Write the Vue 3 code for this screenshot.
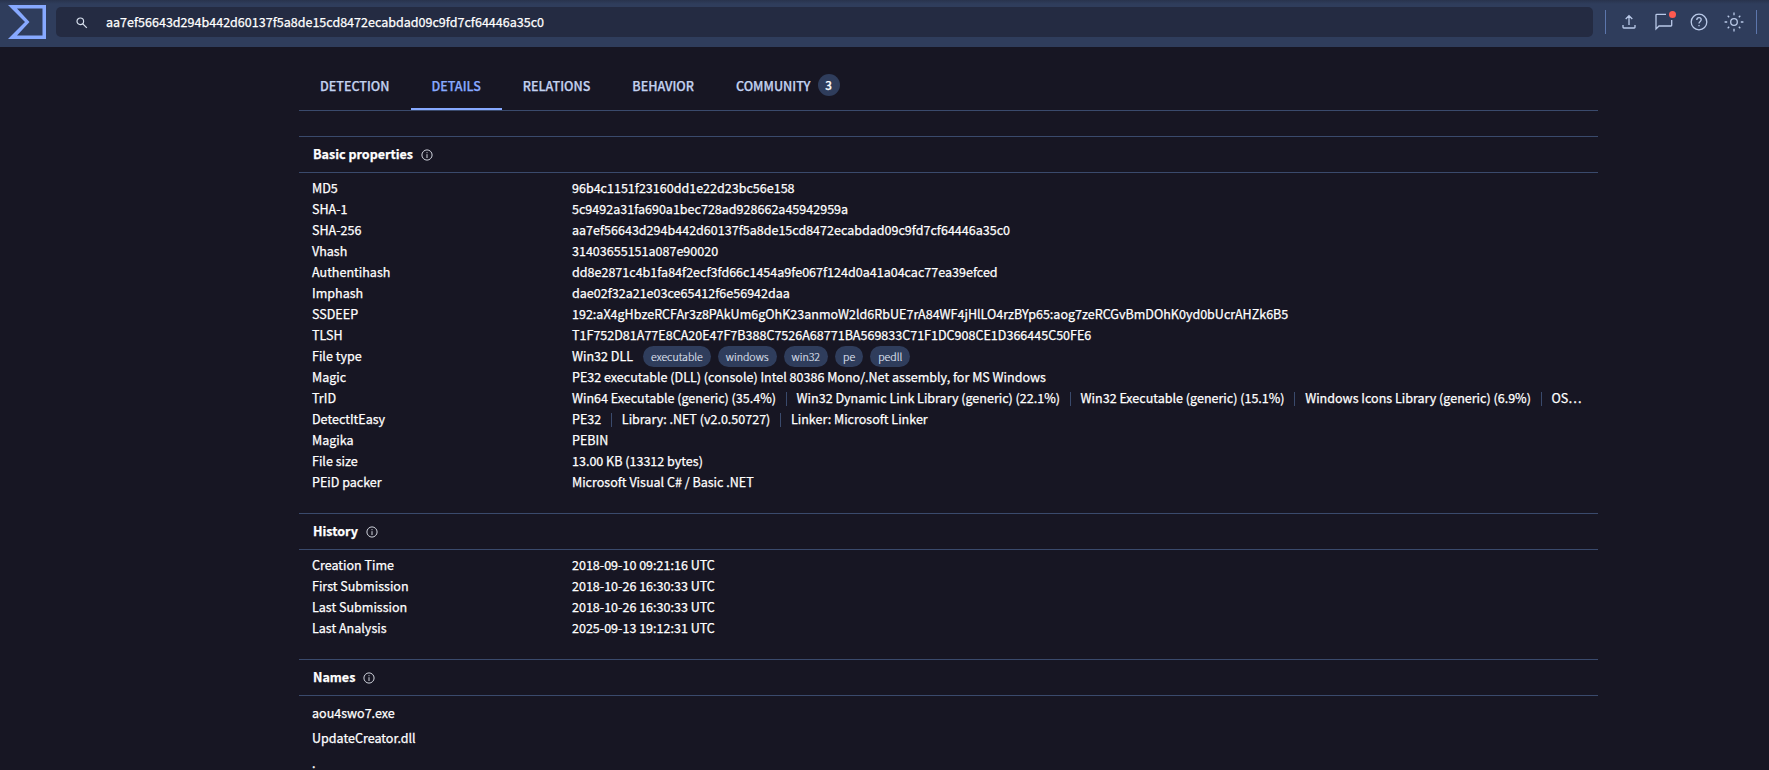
<template>
  <div class="page">
    <header class="topbar">
      <svg class="logo" viewBox="0 0 38 34" width="38" height="34">
        <path fill="#87a9ff" fill-rule="evenodd" d="M0 0H38V34H0L17 17ZM9 3.5L21.5 17L9 30.5H34.5V3.5Z" />
      </svg>
      <div class="search">
        <svg class="search-icon" viewBox="0 0 12 12" width="12" height="12">
          <circle cx="4.3" cy="4.3" r="3.3" />
          <path d="M6.8 6.8L10.8 10.8" />
        </svg>
        <span class="search-text">{{ sha256 }}</span>
      </div>
      <span class="bar"></span>
      <div class="actions">
        <svg viewBox="0 0 20 20" width="20" height="20">
          <path d="M10 13V4M6.7 7L10 3.7L13.3 7M4 13V15.2Q4 16 4.8 16H15.2Q16 16 16 15.2V13" />
        </svg>
        <div class="chat">
          <svg viewBox="0 0 20 20" width="20" height="20">
            <path d="M12 2.3H2.8Q2 2.3 2 3.1V17L5 14H17Q17.7 14 17.7 13.2V8" />
          </svg>
          <span class="dot"></span>
        </div>
        <svg viewBox="0 0 20 20" width="20" height="20">
          <circle cx="10" cy="10" r="7.8" />
          <path d="M7.8 8Q7.8 5.7 10 5.7T12.2 7.8C12.2 9.4 10 9.5 10 11.6M10 13V14.3" />
        </svg>
        <svg viewBox="0 0 20 20" width="20" height="20">
          <circle cx="10" cy="10" r="3.3" />
          <path d="M10 .6V3.2M10 16.8V19.4M.6 10H3.2M16.8 10H19.4M3.7 3.7L5.2 5.2M14.8 14.8L16.3 16.3M3.7 16.3L5.2 14.8M14.8 5.2L16.3 3.7" />
        </svg>
      </div>
      <span class="bar"></span>
    </header>

    <main class="content">
      <nav class="tabs">
        <a v-for="tab in tabs" :key="tab.name" class="tab" :class="{ active: tab.active }">
          <span>{{ tab.name }}</span>
          <span v-if="tab.count" class="count">{{ tab.count }}</span>
        </a>
      </nav>

      <section v-for="section in sections" :key="section.title" class="section">
        <h2 class="section-title">
          <span class="title-text">{{ section.title }}</span>
          <svg class="info" viewBox="0 0 12 12" width="12" height="12">
            <circle cx="6" cy="6" r="5.1" />
            <path d="M6 5.2V9M6 3.2V4.2" />
          </svg>
        </h2>
        <div v-if="section.rows" class="rows">
          <div v-for="row in section.rows" :key="row.label" class="row">
            <span class="label">{{ row.label }}</span>
            <div class="value">
              <span v-for="item in row.items" :key="item" class="item">{{ item }}</span>
              <span v-for="tag in row.tags" :key="tag" class="tag">{{ tag }}</span>
            </div>
          </div>
        </div>
        <div v-else class="names">
          <div v-for="name in section.names" :key="name" class="name">{{ name }}</div>
        </div>
      </section>
    </main>
  </div>
</template>

<script setup>
const sha256 = 'aa7ef56643d294b442d60137f5a8de15cd8472ecabdad09c9fd7cf64446a35c0'

const tabs = [
  { name: 'DETECTION' },
  { name: 'DETAILS', active: true },
  { name: 'RELATIONS' },
  { name: 'BEHAVIOR' },
  { name: 'COMMUNITY', count: 3 },
]

const sections = [
  {
    title: 'Basic properties',
    rows: [
      { label: 'MD5', items: ['96b4c1151f23160dd1e22d23bc56e158'] },
      { label: 'SHA-1', items: ['5c9492a31fa690a1bec728ad928662a45942959a'] },
      { label: 'SHA-256', items: [sha256] },
      { label: 'Vhash', items: ['31403655151a087e90020'] },
      { label: 'Authentihash', items: ['dd8e2871c4b1fa84f2ecf3fd66c1454a9fe067f124d0a41a04cac77ea39efced'] },
      { label: 'Imphash', items: ['dae02f32a21e03ce65412f6e56942daa'] },
      { label: 'SSDEEP', items: ['192:aX4gHbzeRCFAr3z8PAkUm6gOhK23anmoW2ld6RbUE7rA84WF4jHlLO4rzBYp65:aog7zeRCGvBmDOhK0yd0bUcrAHZk6B5'] },
      { label: 'TLSH', items: ['T1F752D81A77E8CA20E47F7B388C7526A68771BA569833C71F1DC908CE1D366445C50FE6'] },
      { label: 'File type', items: ['Win32 DLL'], tags: ['executable', 'windows', 'win32', 'pe', 'pedll'] },
      { label: 'Magic', items: ['PE32 executable (DLL) (console) Intel 80386 Mono/.Net assembly, for MS Windows'] },
      {
        label: 'TrID',
        items: [
          'Win64 Executable (generic) (35.4%)',
          'Win32 Dynamic Link Library (generic) (22.1%)',
          'Win32 Executable (generic) (15.1%)',
          'Windows Icons Library (generic) (6.9%)',
          'OS…',
        ],
      },
      { label: 'DetectItEasy', items: ['PE32', 'Library: .NET (v2.0.50727)', 'Linker: Microsoft Linker'] },
      { label: 'Magika', items: ['PEBIN'] },
      { label: 'File size', items: ['13.00 KB (13312 bytes)'] },
      { label: 'PEiD packer', items: ['Microsoft Visual C# / Basic .NET'] },
    ],
  },
  {
    title: 'History',
    rows: [
      { label: 'Creation Time', items: ['2018-09-10 09:21:16 UTC'] },
      { label: 'First Submission', items: ['2018-10-26 16:30:33 UTC'] },
      { label: 'Last Submission', items: ['2018-10-26 16:30:33 UTC'] },
      { label: 'Last Analysis', items: ['2025-09-13 19:12:31 UTC'] },
    ],
  },
  {
    title: 'Names',
    names: ['aou4swo7.exe', 'UpdateCreator.dll', '.'],
  },
]
</script>

<style>
body {
  margin: 0;
  background: #171623;
}
</style>

<style scoped>
.page {
  height: 770px;
  overflow: hidden;
  background: #171623;
  color: #fff;
  font-family: "Noto Sans CJK SC", "Noto Sans", sans-serif;
  font-size: 12.54px;
  line-height: 19px;
  -webkit-text-stroke: 0.25px;
}

.topbar {
  display: flex;
  align-items: center;
  box-sizing: border-box;
  height: 47px;
  padding: 0 12px 3px 8px;
  background: linear-gradient(#29334d, #2f3d5c 4px);
}

.logo {
  flex: none;
}

.search {
  display: flex;
  flex: none;
  align-items: center;
  width: 1537px;
  height: 30px;
  margin-left: 10px;
  border-radius: 5px;
  background: #242b42;
}

.search-icon {
  margin: 1px 18px 0 20px;
  fill: none;
  stroke: #d8e0ee;
  stroke-width: 1.2;
}

.search-text {
  padding-bottom: 1px;
}

.bar {
  flex: none;
  width: 1px;
  height: 24px;
  margin-left: 12px;
  background: #5c76ac;
}

.actions {
  display: flex;
  flex: none;
  gap: 15px;
  margin: 0 0.5px 0 12.5px;
}

.actions svg {
  display: block;
  fill: none;
  stroke: #b9c9e8;
  stroke-width: 1.3;
}

.chat {
  position: relative;
}

.dot {
  position: absolute;
  top: -1px;
  right: -2px;
  width: 7px;
  height: 7px;
  border-radius: 50%;
  background: #ff5a50;
}

.content {
  width: 1299px;
  margin-left: 299px;
}

.tabs {
  display: flex;
  height: 63px;
  margin-bottom: 25px;
  border-bottom: 1px solid #3a4a6c;
}

.tab {
  display: flex;
  align-items: center;
  box-sizing: border-box;
  padding: 15px 21px 0;
  border-bottom: 2px solid transparent;
  color: #c3d2f0;
  font-weight: 500;
}

.tab.active {
  border-color: #87a9ff;
  color: #87a9ff;
}

.count {
  width: 22px;
  height: 22px;
  margin-left: 7px;
  border-radius: 50%;
  background: #2f3d5c;
  color: #fff;
  font-size: 11.6px;
  line-height: 23px;
  text-align: center;
}

.section {
  margin-bottom: 20px;
}

.section-title {
  display: flex;
  align-items: center;
  box-sizing: border-box;
  height: 37px;
  margin: 0;
  padding-left: 14px;
  border-top: 1px solid #3a4a6c;
  border-bottom: 1px solid #3a4a6c;
  font-size: 12.54px;
  font-weight: 700;
}

.title-text {
  padding-bottom: 2px;
}

.info {
  margin-left: 8px;
  fill: none;
  stroke: #d0d3dc;
  stroke-width: 1;
}

.rows {
  padding: 5px 13px 0;
}

.row {
  display: flex;
  height: 21px;
}

.label {
  flex: none;
  width: 260px;
}

.value {
  display: flex;
  align-items: flex-start;
  white-space: nowrap;
}

.item + .item {
  display: flex;
  align-items: center;
}

.item + .item::before {
  content: "";
  width: 1px;
  height: 14px;
  margin: 2px 9.8px 0;
  background: #3a4a6c;
}

.tag {
  height: 21px;
  margin-left: 7px;
  padding: 0 8px;
  border-radius: 11px;
  background: #2f3d5c;
  color: #e2e9f7;
  font-size: 10.6px;
  font-weight: 300;
  line-height: 22px;
  -webkit-text-stroke: 0.15px;
}

.item + .tag {
  margin-left: 10px;
}

.names {
  padding: 5px 13px 0;
}

.name {
  height: 25px;
  line-height: 24px;
}
</style>
